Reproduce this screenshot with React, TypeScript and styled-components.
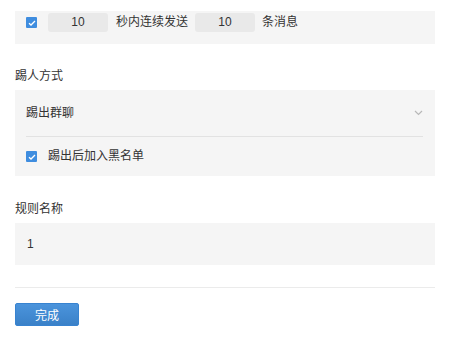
import * as React from 'react';
import styled, { createGlobalStyle } from 'styled-components';

const GlobalStyle = createGlobalStyle`
  body {
    margin: 0;
    background: #fff;
    font-family: 'Liberation Sans', 'Noto Sans CJK SC', sans-serif;
    font-size: 12px;
    color: #333;
  }

  * {
    box-sizing: border-box;
  }
`;

const Page = styled.div`
  padding: 11px 18px 0 15px;
  display: flex;
  flex-direction: column;
`;

const Panel = styled.div`
  background: #f5f5f5;
  padding: 0 12px 0 11px;
`;

const RateRow = styled.div`
  display: flex;
  align-items: center;
  height: 33px;
  padding: 2px 0 12px;
`;

const CheckBox = styled.span`
  width: 11px;
  height: 11px;
  border-radius: 1px;
  background: #3f8ddf;
  display: inline-flex;
  align-items: center;
  justify-content: center;
  flex-shrink: 0;
`;

const NumberBox = styled.div<{ $before?: number; $after?: number }>`
  width: 60px;
  height: 19px;
  border-radius: 3px;
  background: #e9e9e9;
  display: flex;
  align-items: center;
  justify-content: center;
  line-height: 19px;
  margin: 0 ${(p) => p.$after ?? 7}px 0 ${(p) => p.$before ?? 7}px;
`;

const Text = styled.span`
  line-height: 19px;
  white-space: nowrap;
`;

const SectionLabel = styled.div<{ $top: number }>`
  line-height: 18px;
  margin: ${(p) => p.$top}px 0 5px;
`;

const SelectRow = styled.div`
  height: 46px;
  display: flex;
  align-items: center;
  justify-content: space-between;
`;

const Chevron = styled.svg`
  width: 9px;
  height: 6px;
`;

const Divider = styled.div`
  height: 1px;
  background: #e2e2e2;
`;

const CheckRow = styled.div`
  height: 39px;
  display: flex;
  align-items: center;
  gap: 11px;
`;

const NameBox = styled(Panel)`
  height: 42px;
  display: flex;
  align-items: center;
  padding-left: 12px;
`;

const Footer = styled.div`
  margin-top: 22px;
  padding-top: 15px;
  border-top: 1px solid #ebebeb;
`;

const Button = styled.button`
  width: 64px;
  height: 23px;
  border: 1px solid #3883d0;
  border-radius: 2px;
  background: linear-gradient(#4b94dc, #3a81c8);
  color: #fff;
  font-family: inherit;
  font-size: 12px;
  padding: 0;
  cursor: pointer;
`;

const Check = () => (
  <CheckBox>
    <svg width="8" height="6" viewBox="0 0 8 6">
      <path d="M1 3.2 L3 5 L7 1" fill="none" stroke="#fff" strokeWidth="1.3" />
    </svg>
  </CheckBox>
);

export default function App() {
  return (
    <Page>
      <GlobalStyle />
      <Panel>
        <RateRow>
          <Check />
          <NumberBox $before={11} $after={8}>10</NumberBox>
          <Text>秒内连续发送</Text>
          <NumberBox>10</NumberBox>
          <Text>条消息</Text>
        </RateRow>
      </Panel>

      <SectionLabel $top={23}>踢人方式</SectionLabel>
      <Panel>
        <SelectRow>
          <Text>踢出群聊</Text>
          <Chevron viewBox="0 0 9 6">
            <path d="M1 1 L4.5 4.5 L8 1" fill="none" stroke="#b8b8b8" strokeWidth="1.2" />
          </Chevron>
        </SelectRow>
        <Divider />
        <CheckRow>
          <Check />
          <Text>踢出后加入黑名单</Text>
        </CheckRow>
      </Panel>

      <SectionLabel $top={24}>规则名称</SectionLabel>
      <NameBox>1</NameBox>

      <Footer>
        <Button>完成</Button>
      </Footer>
    </Page>
  );
}
